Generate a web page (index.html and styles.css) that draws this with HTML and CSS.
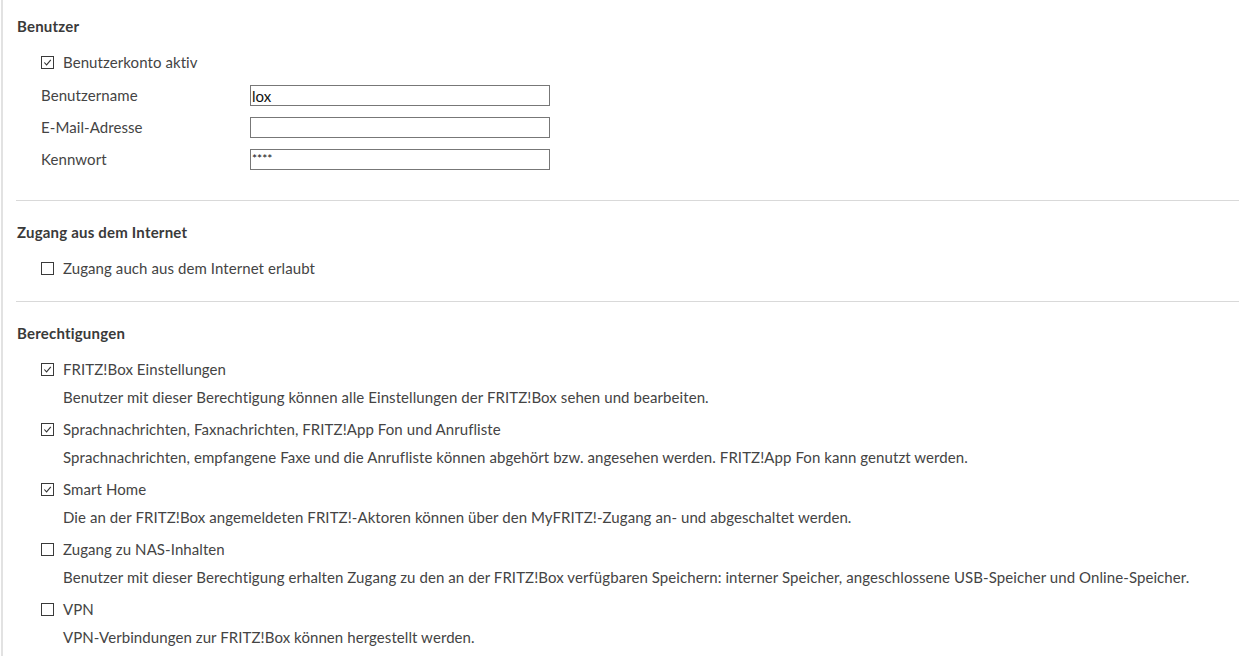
FILE: index.html
```html
<html>
<head>
    <title>Benutzer</title>
    <link rel="stylesheet" href="styles.css">
</head>
<body>
<div class="page">

    <div class="section">
        <h2>Benutzer</h2>
        <div class="check-row">
            <span class="box checked"><svg viewBox="0 0 12 12"><polyline points="2.5,6 5,8.7 9.6,3.2"/></svg></span>
            <span class="check-label">Benutzerkonto aktiv</span>
        </div>
        <div class="form-grid">
            <label class="form-label" for="name">Benutzername</label>
            <input class="text-input" id="name" type="text" value="lox">
            <label class="form-label" for="mail">E-Mail-Adresse</label>
            <input class="text-input" id="mail" type="text" value="">
            <label class="form-label" for="pass">Kennwort</label>
            <input class="text-input pass" id="pass" type="text" value="****">
        </div>
    </div>

    <div class="section">
        <h2>Zugang aus dem Internet</h2>
        <div class="check-row">
            <span class="box"></span>
            <span class="check-label">Zugang auch aus dem Internet erlaubt</span>
        </div>
    </div>

    <div class="section last">
        <h2>Berechtigungen</h2>
        <div class="perm">
            <div class="check-row">
                <span class="box checked"><svg viewBox="0 0 12 12"><polyline points="2.5,6 5,8.7 9.6,3.2"/></svg></span>
                <span class="check-label">FRITZ!Box Einstellungen</span>
            </div>
            <div class="perm-desc">Benutzer mit dieser Berechtigung können alle Einstellungen der FRITZ!Box sehen und bearbeiten.</div>
        </div>
        <div class="perm">
            <div class="check-row">
                <span class="box checked"><svg viewBox="0 0 12 12"><polyline points="2.5,6 5,8.7 9.6,3.2"/></svg></span>
                <span class="check-label">Sprachnachrichten, Faxnachrichten, FRITZ!App Fon und Anrufliste</span>
            </div>
            <div class="perm-desc">Sprachnachrichten, empfangene Faxe und die Anrufliste können abgehört bzw. angesehen werden. FRITZ!App Fon kann genutzt werden.</div>
        </div>
        <div class="perm">
            <div class="check-row">
                <span class="box checked"><svg viewBox="0 0 12 12"><polyline points="2.5,6 5,8.7 9.6,3.2"/></svg></span>
                <span class="check-label">Smart Home</span>
            </div>
            <div class="perm-desc">Die an der FRITZ!Box angemeldeten FRITZ!-Aktoren können über den MyFRITZ!-Zugang an- und abgeschaltet werden.</div>
        </div>
        <div class="perm">
            <div class="check-row">
                <span class="box"></span>
                <span class="check-label">Zugang zu NAS-Inhalten</span>
            </div>
            <div class="perm-desc">Benutzer mit dieser Berechtigung erhalten Zugang zu den an der FRITZ!Box verfügbaren Speichern: interner Speicher, angeschlossene USB-Speicher und Online-Speicher.</div>
        </div>
        <div class="perm">
            <div class="check-row">
                <span class="box"></span>
                <span class="check-label">VPN</span>
            </div>
            <div class="perm-desc">VPN-Verbindungen zur FRITZ!Box können hergestellt werden.</div>
        </div>
    </div>

</div>
</body>
</html>
```

FILE: styles.css
```css
body {
    margin: 0;
    font-family: 'Lato', 'Liberation Sans', sans-serif;
    font-size: 15px;
    line-height: 20px;
    letter-spacing: 0.08px;
    color: #444;
    background: #fff;
}

.page {
    margin-left: 1px;
    border-left: 2px solid #e2e2e2;
    padding-left: 13px;
    min-height: 656px;
}

.section {
    padding-top: 21px;
    padding-bottom: 23px;
    border-bottom: 1px solid #d9d9d9;
}

.section:first-child {
    padding-top: 16px;
    padding-bottom: 30px;
}

.section.last {
    border-bottom: none;
}

h2 {
    margin: 0 0 16px 1px;
    font-size: 15px;
    line-height: 20px;
    letter-spacing: 0.2px;
    font-weight: bold;
    color: #3a3a3a;
}

.check-row {
    display: flex;
    align-items: center;
    padding-left: 25px;
    height: 20px;
}

.box {
    display: inline-block;
    width: 11px;
    height: 11px;
    border: 1px solid #3a3a3a;
    margin-right: 9px;
    box-sizing: content-box;
}

.box svg {
    display: block;
    width: 11px;
    height: 11px;
}

.box polyline {
    fill: none;
    stroke: #333;
    stroke-width: 1.2;
}

.form-grid {
    display: grid;
    grid-template-columns: 209px 300px;
    row-gap: 11px;
    margin-top: 13px;
    padding-left: 25px;
}

.form-label {
    line-height: 21px;
}

.text-input {
    height: 21px;
    width: 300px;
    box-sizing: border-box;
    border: 1px solid #777;
    padding: 0 1px;
    margin: 0;
    font-family: 'Lato', 'Liberation Sans', sans-serif;
    font-size: 15px;
    color: #111;
    outline: none;
}

.text-input.pass {
    font-size: 12px;
    padding-bottom: 3px;
}

.perm {
    margin-bottom: 12px;
}

.perm-desc {
    margin-top: 8px;
    padding-left: 47px;
}
```
